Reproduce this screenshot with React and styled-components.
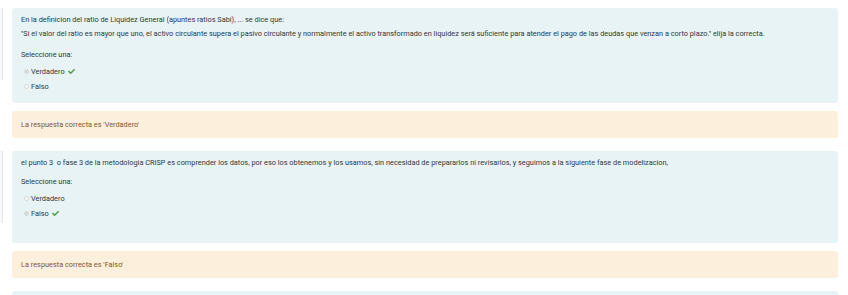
import React from "react";
import styled, { createGlobalStyle } from "styled-components";
import { FaCheck } from "react-icons/fa";

const GlobalStyle = createGlobalStyle`
  body {
    margin: 0;
    background: #ffffff;
    font-family: Roboto, "Liberation Sans", Arial, sans-serif;
    color: #33373b;
  }
`;

const questions = [
  {
    id: 1,
    text: [
      "En la definicion del ratio de Liquidez General (apuntes ratios Sabi), ... se dice que:",
      "\"Si el valor del ratio es mayor que uno, el activo circulante supera el pasivo circulante y normalmente el activo transformado en liquidez será suficiente para atender el pago de las deudas que venzan a corto plazo.\" elija la correcta.",
    ],
    options: ["Verdadero", "Falso"],
    answer: 0,
    gap: 11,
    extra: 0,
  },
  {
    id: 2,
    text: [
      "el punto 3  o fase 3 de la metodologia CRISP es comprender los datos, por eso los obtenemos y los usamos, sin necesidad de prepararlos ni revisarlos, y seguimos a la siguiente fase de modelizacion,",
    ],
    options: ["Verdadero", "Falso"],
    answer: 1,
    gap: 9,
    extra: 13,
  },
];

const Page = styled.div`
  padding-top: 8px;
  display: flex;
  flex-direction: column;
  gap: 13px;
  height: 295px;
  overflow: hidden;
`;

const Question = styled.div`
  display: flex;
  align-items: flex-start;
`;

const Info = styled.div`
  width: 2px;
  height: 72px;
  background: #f8f9fa;
  border-right: 1px solid #e3e6e9;
  flex-shrink: 0;
`;

const Content = styled.div`
  flex: 1;
  margin: 0 10px 0 9px;
  display: flex;
  flex-direction: column;
  gap: 8px;
`;

const Formulation = styled.div`
  background: #e7f3f5;
  border-radius: 3px;
  padding: 7px 9px ${(p) => 9 + p.$extra}px;
  font-size: 7.35px;
  line-height: 10px;
`;

const QText = styled.p`
  margin: 0 0 4px;
  white-space: pre-wrap;
`;

const Prompt = styled.div`
  margin-top: ${(p) => p.$gap}px;
  margin-bottom: 4px;
`;

const Option = styled.label`
  display: flex;
  align-items: center;
  height: 15px;
  padding-left: 3px;
`;

const Radio = styled.span`
  width: 5px;
  height: 5px;
  border-radius: 50%;
  border: 1px solid #d3d6d8;
  background: ${(p) => (p.$checked ? "#e0e2e3" : "#ffffff")};
  box-sizing: border-box;
  margin-right: 2px;
  position: relative;
  &::after {
    content: "";
    display: ${(p) => (p.$checked ? "block" : "none")};
    position: absolute;
    left: 1px;
    top: 1px;
    width: 1px;
    height: 1px;
    border-radius: 50%;
    background: #b8bcbf;
  }
`;

const Check = styled(FaCheck)`
  color: #4e9a3e;
  font-size: 7px;
  margin-left: 3px;
`;

const Outcome = styled.div`
  background: #fcefdc;
  color: #7d5a29;
  border-radius: 3px;
  height: 27px;
  padding: 0 9px;
  display: flex;
  align-items: center;
  font-size: 7.35px;
`;

const Next = styled.div`
  margin: 0 10px 0 12px;
  height: 20px;
  background: #e7f3f5;
  border-radius: 3px;
`;

const App = () => {
  return (
    <Page>
      <GlobalStyle />
      {questions.map((q) => (
        <Question key={q.id}>
          <Info />
          <Content>
            <Formulation $extra={q.extra}>
              {q.text.map((t, i) => (
                <QText key={i}>{t}</QText>
              ))}
              <Prompt $gap={q.gap}>Seleccione una:</Prompt>
              {q.options.map((o, i) => (
                <Option key={o}>
                  <Radio $checked={q.answer === i} />
                  {o}
                  {q.answer === i && <Check />}
                </Option>
              ))}
            </Formulation>
            <Outcome>La respuesta correcta es '{q.options[q.answer]}'</Outcome>
          </Content>
        </Question>
      ))}
      <Next />
    </Page>
  );
};

export default App;
